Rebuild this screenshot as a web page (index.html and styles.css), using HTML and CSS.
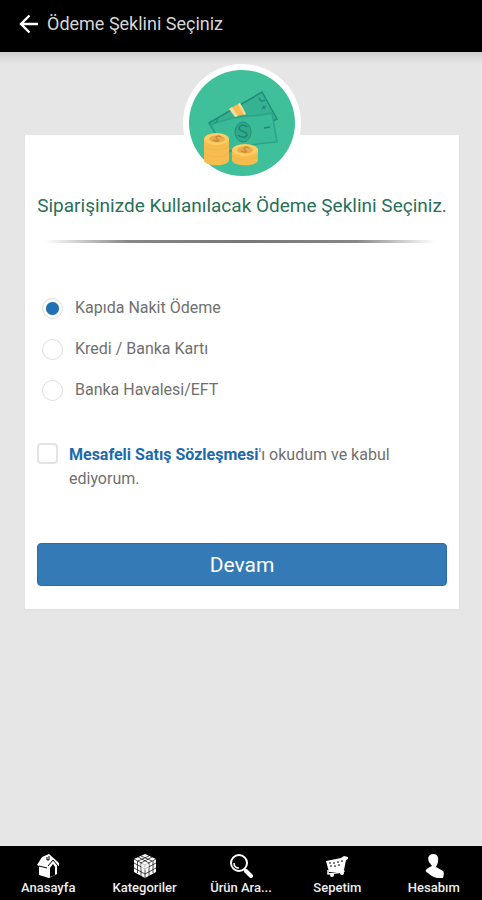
FILE: index.html
```html
<!DOCTYPE html>
<html lang="tr">
<head>
<meta charset="utf-8">
<meta name="viewport" content="width=device-width, initial-scale=1">
<title>Ödeme Şeklini Seçiniz</title>
<link rel="stylesheet" href="styles.css">
</head>
<body>
<header class="topbar">
  <button class="back" type="button" aria-label="Geri">
    <svg width="20" height="20" viewBox="0 0 20 20" fill="none" stroke="#fff" stroke-width="2.400"><path d="M19 10H2M10.500 1.500L2 10l8.500 8.500"/></svg>
  </button>
  <h1 class="title">Ödeme Şeklini Seçiniz</h1>
</header>
<main class="content">
  <form class="card">
    <div class="emblem">
      <svg viewBox="0 0 106 106" aria-hidden="true">
        <circle cx="53" cy="53" r="53" fill="#3fc09b"/>
        <path d="M20 53L73 22L88 49L36 79Z" fill="#35b292" stroke="#218c77" stroke-width="1.500"/>
        <path d="M25 53c3 0 4-2 3-5M70 28c1 3 3 4 6 2M77 36l-4 3m1-3l2 3" fill="none" stroke="#218c77" stroke-width="1.500"/>
        <path d="M22 55C50 43 64 48 83 43L88 72C69 74 54 74 37 83Z" fill="#3abb98" stroke="#2da388" stroke-width="1.500"/>
        <ellipse cx="54" cy="62" rx="8" ry="10" fill="#30a98b" stroke="#229078"/>
        <path d="M58 57c-2-3-8-2-8 1c0 4 9 3 8 7c-1 3-6 3-9 0M75 58l6-1" fill="none" stroke="#1d876f" stroke-width="1.500"/>
        <path d="M40 39l11-6l6 11l-9 2Z" fill="#f8bd54"/>
        <path d="M40 39l3-2l6 9l-3 1ZM49 34l2-1l6 11l-2 1Z" fill="#f3dc9b"/>
        <path d="M15 69v21c0 7 25 7 25 0V69Z" fill="#f6bd4e"/>
        <ellipse cx="27.500" cy="69" rx="12.500" ry="6" fill="#ffcd64"/>
        <ellipse cx="28" cy="69" rx="8" ry="3.500" fill="#e8ad4a"/>
        <path d="M15 76c4 5 21 5 25 0M15 83c4 5 21 5 25 0" fill="none" stroke="#f1b64a"/>
        <path d="M32 67c-3-2-7 0-4 2s1 3-4 1" fill="none" stroke="#c78a3f" stroke-width="1.500"/>
        <path d="M43 80v10c0 7 26 7 26 0V80Z" fill="#f6bd4e"/>
        <ellipse cx="56" cy="80" rx="13" ry="6" fill="#ffcd64"/>
        <ellipse cx="56" cy="80" rx="8" ry="3.500" fill="#e8ad4a"/>
        <path d="M43 86c4 5 22 5 26 0" fill="none" stroke="#f1b64a"/>
        <path d="M60 78c-3-2-7 0-4 2s1 3-4 1" fill="none" stroke="#c78a3f" stroke-width="1.500"/>
      </svg>
    </div>
    <h2 class="heading">Siparişinizde Kullanılacak Ödeme Şeklini Seçiniz.</h2>
    <hr class="rule">
    <div class="options" role="radiogroup" aria-label="Ödeme şekli">
      <label class="option"><input class="radio" type="radio" name="payment" checked><span>Kapıda Nakit Ödeme</span></label>
      <label class="option"><input class="radio" type="radio" name="payment"><span>Kredi / Banka Kartı</span></label>
      <label class="option"><input class="radio" type="radio" name="payment"><span>Banka Havalesi/EFT</span></label>
    </div>
    <div class="agreement">
      <input class="check" type="checkbox" id="terms">
      <label for="terms"><a class="terms-link" href="#">Mesafeli Satış Sözleşmesi</a>'ı okudum ve kabul ediyorum.</label>
    </div>
    <button class="submit" type="submit">Devam</button>
  </form>
</main>
<nav class="tabs">
  <a class="tab" href="#">
    <svg width="24" height="24" viewBox="0 0 24 24"><path d="M1 11L6 3L13 0l10 9v3l-2-1v9l-8 4l-10-3V12Z" fill="#fff"/><path d="M12 12l5-6l5 6M3 12l8 2M11 3v3h2V2" fill="none" stroke="#000"/><path d="M14 14l3-4l2 3v8l-5 2Z"/></svg>
    <span>Anasayfa</span></a>
  <a class="tab" href="#">
    <svg width="24" height="24" viewBox="0 0 24 24"><path d="M12 0l11 5v13l-11 6L1 18V5Z" fill="#fff"/><path d="M1 5l11 6l11-6M12 11v13M4.500 7v12M8 9v13M16 9v13M20 7v12M1 9l11 6l11-6M1 14l11 6l11-6M5 3l11 6M8 2l11 5M19 3L8 9M16 2L5 7" fill="none" stroke="#000" stroke-width=".7"/><circle cx="12" cy="12" r="4" fill="#fff" opacity=".65"/></svg>
    <span>Kategoriler</span></a>
  <a class="tab" href="#">
    <svg width="24" height="24" viewBox="0 0 24 24" fill="none" stroke="#fff"><circle cx="10" cy="9" r="8" stroke-width="2"/><path d="M5 9c0 3 2 5 5 5" stroke-width="1.500"/><path d="M15 15l2 2" stroke-width="2"/><path d="M17 17l5 5" stroke-width="4" stroke-linecap="round"/></svg>
    <span>Ürün Ara...</span></a>
  <a class="tab" href="#">
    <svg width="24" height="24" viewBox="0 0 24 24"><path d="M1 7l15-3l3-2l4 1v2l-2 1l-2 10l-2 2H4Z" fill="#fff"/><path d="M3 16v4l15-2M18 15l1 3" fill="none" stroke="#fff" stroke-width="1.500"/><path d="M4 9h2m2 0h2m2-1h2m2-1h2M5 12h2m2 0h2m2-1h2" stroke="#000" stroke-width="1"/><circle cx="7" cy="21" r="2" fill="#fff"/><circle cx="17" cy="19" r="2" fill="#fff"/></svg>
    <span>Sepetim</span></a>
  <a class="tab" href="#">
    <svg width="24" height="24" viewBox="0 0 24 24" fill="#fff"><path d="M11 0c4 0 6 3 5 7c0 3-2 5-2 6l7 4c1 1 1 4 0 7c-6 1-11-1-15-5c-2-1-3-2-2-3c1-2 4-3 6-4L7 8C5 4 7 0 11 0Z"/></svg>
    <span>Hesabım</span></a>
</nav>
</body>
</html>
```
FILE: styles.css
```css
* { box-sizing: border-box; }
body {
  margin: 0;
  min-height: 100vh;
  display: flex;
  flex-direction: column;
  background: #e6e6e6;
  color: #707070;
  font-family: Roboto, "Liberation Sans", sans-serif;
  font-size: 16px;
  line-height: 24px;
}
.topbar {
  display: flex;
  align-items: center;
  gap: 8px;
  height: 52px;
  padding: 0 19px;
  padding-bottom: 4px;
  background: #000;
}
.back { display: flex; padding: 0; border: 0; background: none; }
.title { margin: 0; color: #d6d6d6; font-size: 18px; font-weight: 400; }
.content {
  flex: 1;
  padding: 83px 23px 32px 25px;
  background: linear-gradient(#cfcfcf, #e6e6e6 12px);
}
.card {
  display: flex;
  flex-direction: column;
  padding: 0 12px 23px;
  background: #fff;
  box-shadow: 0 1px 2px #ddd;
}
.emblem {
  align-self: center;
  width: 118px;
  height: 118px;
  margin-top: -71px;
  padding: 6px;
  border-radius: 50%;
  background: #fff;
}
.emblem svg { display: block; width: 100%; }
.heading {
  margin: 12px 0 0;
  color: #2a6f58;
  font-size: 19px;
  font-weight: 400;
  text-align: center;
}
.rule {
  width: 100%;
  height: 3px;
  margin: 22px 0 0;
  border: 0;
  background: linear-gradient(90deg, transparent 2%, #888 22%, #777 50%, #888 78%, transparent 97%);
}
.options { display: flex; flex-direction: column; gap: 17px; margin: 53px 0 0 5px; }
.option { display: flex; align-items: center; gap: 12px; }
.radio, .check {
  flex: none;
  appearance: none;
  width: 21px;
  height: 21px;
  margin: 0;
  border: 1px solid #ddd;
  background: #fff;
}
.radio { border-radius: 50%; }
.radio:checked { background: radial-gradient(circle, #2070b4 6px, #fff 7px); }
.check { border: 2px solid #e4e4e4; border-radius: 4px; }
.agreement { display: flex; gap: 11px; margin-top: 41px; }
.terms-link { color: #1b6aae; font-weight: 700; text-decoration: none; }
.submit {
  height: 43px;
  margin-top: 52px;
  padding: 0;
  border: 1px solid #2c6da7;
  border-radius: 4px;
  background: #337ab7;
  color: #fff;
  font: inherit;
  font-size: 21px;
}
.tabs {
  display: grid;
  grid-template-columns: repeat(5, 1fr);
  height: 54px;
  padding-top: 8px;
  background: #000;
}
.tab {
  display: flex;
  flex-direction: column;
  align-items: center;
  gap: 2px;
  color: #eee;
  font-size: 13px;
  line-height: 16px;
  font-weight: 500;
  text-decoration: none;
}
```
